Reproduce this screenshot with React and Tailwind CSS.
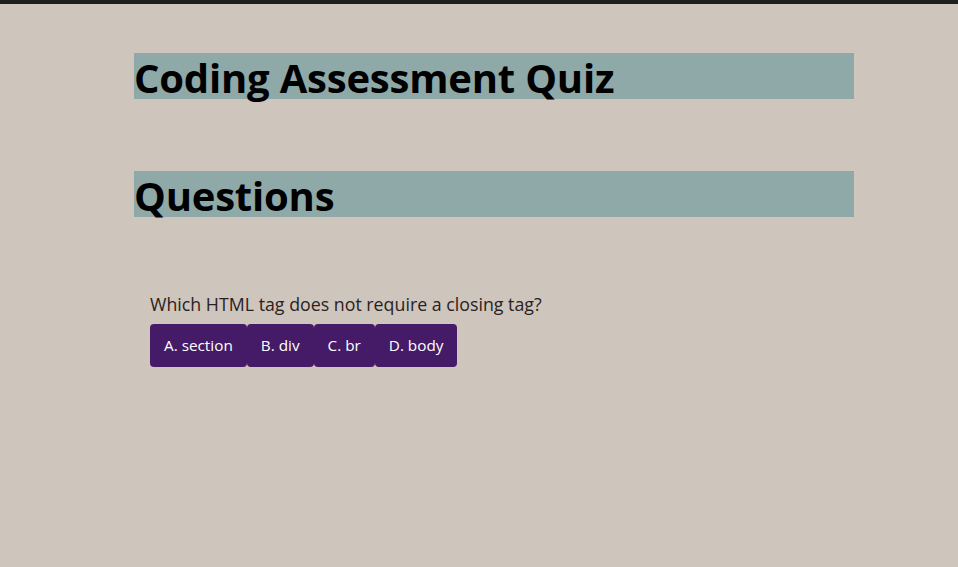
export default function App() {
  const answers = ['A. section', 'B. div', 'C. br', 'D. body'];

  return (
    <div className="min-h-[567px] bg-[#cec5bc] font-['Open_Sans',sans-serif]">
      <div className="h-[4px] bg-[#1f1f1f]"></div>
      <div className="w-[720px] ml-[134px] pt-[49px]">
        <h1 className="bg-[#8fa8a8] text-black text-[40px] font-bold h-[46px] leading-[50px] tracking-[-0.2px]">
          Coding Assessment Quiz
        </h1>
        <h2 className="bg-[#8fa8a8] text-black text-[40px] font-bold h-[46px] leading-[50px] tracking-[-0.2px] mt-[72px]">
          Questions
        </h2>

        {/* Question */}
        <div className="px-4 mt-[75px]">
          <p className="text-[17.8px] text-[#2a2222] leading-[24px]">Which HTML tag does not require a closing tag?</p>
          <div className="flex mt-[8px]">
            {answers.map((a) => (
              <button
                key={a}
                className="bg-[#451b68] text-white text-[15.3px] h-[43px] px-[14px] rounded-[4px]"
              >
                {a}
              </button>
            ))}
          </div>
        </div>
      </div>
    </div>
  );
}
